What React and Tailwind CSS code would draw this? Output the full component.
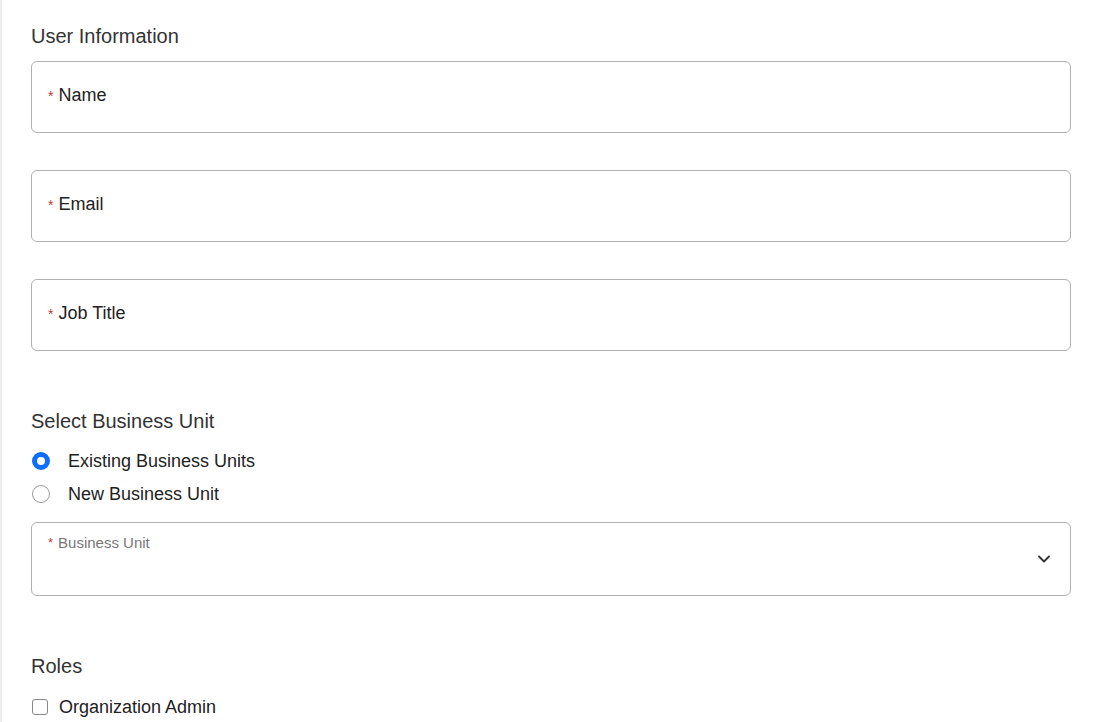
import { ChevronDown } from "lucide-react";

const field = (label) => (
  <div className="h-[72px] rounded-md border border-[#b0b0b0] bg-white px-4 flex items-center">
    <span className="text-[18px] leading-5 text-[#222] -mt-[5px]">
      <span className="text-[#c23934] text-[14px] align-top mr-[5px] relative top-[1px]">*</span>
      {label}
    </span>
  </div>
);

export default function App() {
  return (
    <div className="min-h-screen bg-white flex font-['Liberation_Sans',Arial,sans-serif]">
      <div className="w-[2px] bg-[#ececec]" />
      <div className="flex-1 pl-[29px] pr-[30px] pt-[24px] text-[#333]">
        <h2 className="text-[20px] leading-6 text-[#333]">User Information</h2>
        <div className="mt-[13px] flex flex-col gap-[37px]">
          {field("Name")}
          {field("Email")}
          {field("Job Title")}
        </div>

        <h2 className="mt-[58px] text-[20px] leading-6 text-[#333]">Select Business Unit</h2>
        <div className="mt-[18px] flex flex-col gap-[13px]">
          <label className="flex items-center gap-[18px] text-[18px] leading-5 text-[#222]">
            <span className="w-[18px] h-[18px] ml-[1px] rounded-full border-[5px] border-[#0d6efd] bg-white" />
            Existing Business Units
          </label>
          <label className="flex items-center gap-[18px] text-[18px] leading-5 text-[#222]">
            <span className="w-[18px] h-[18px] ml-[1px] rounded-full border border-[#9a9a9a] bg-white" />
            New Business Unit
          </label>
        </div>

        <div className="mt-[18px] h-[74px] rounded-md border border-[#b0b0b0] bg-white pl-4 pr-4 pt-[12px] flex justify-between">
          <span className="text-[15px] leading-4 text-[#777]">
            <span className="text-[#c23934] text-[13px] align-top mr-[5px]">*</span>
            Business Unit
          </span>
          <ChevronDown size={20} strokeWidth={2.2} className="mt-[14px] text-[#333]" />
        </div>

        <h2 className="mt-[58px] text-[20px] leading-6 text-[#333]">Roles</h2>
        <label className="mt-[19px] flex items-center gap-[11px] text-[18px] leading-5 text-[#222]">
          <span className="w-[16px] h-[16px] ml-[1px] rounded-[3px] border border-[#888] bg-white" />
          Organization Admin
        </label>
      </div>
    </div>
  );
}
